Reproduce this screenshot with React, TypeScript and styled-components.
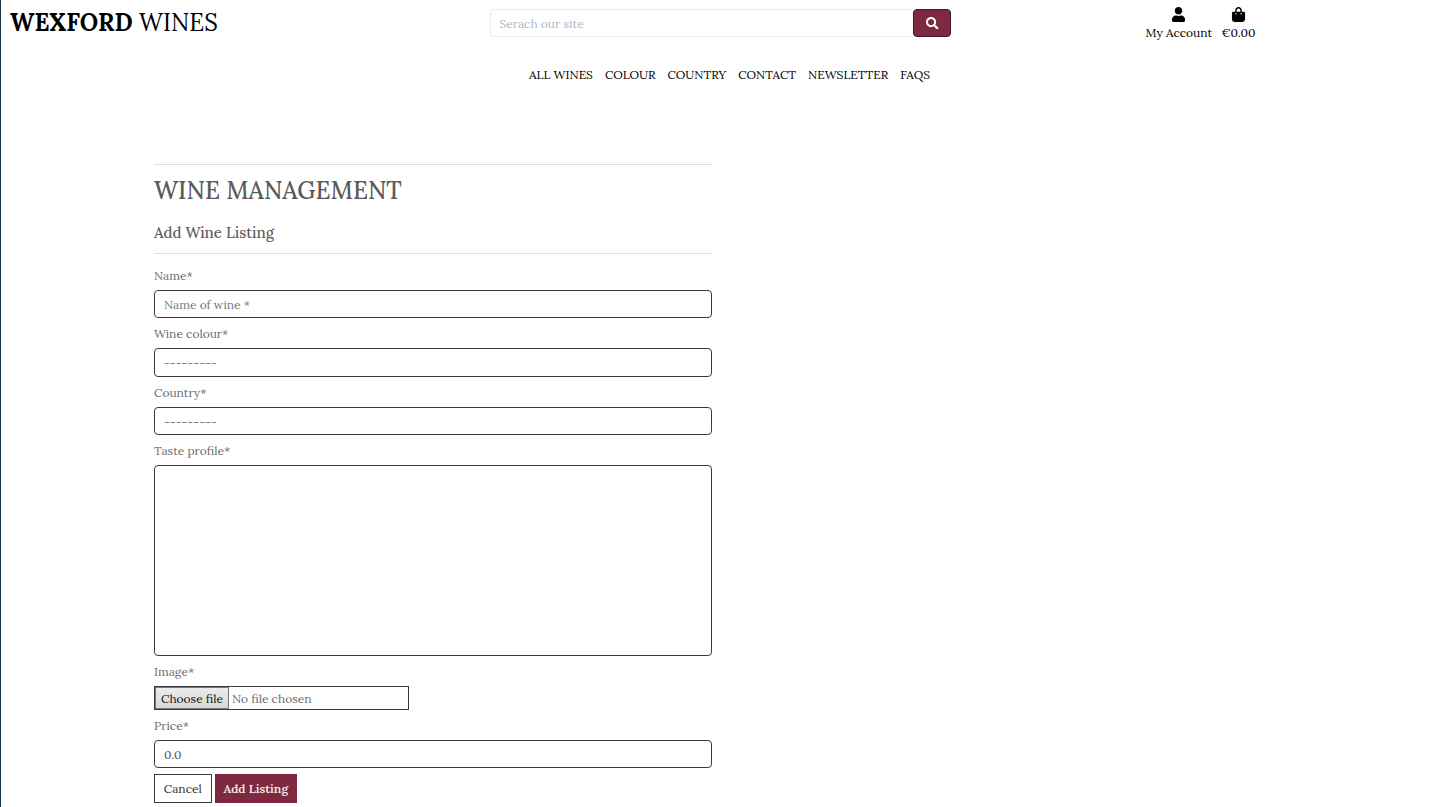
import React from "react";
import styled, { createGlobalStyle } from "styled-components";
import { FaSearch, FaUser } from "react-icons/fa";
import { FaBagShopping } from "react-icons/fa6";

const GlobalStyle = createGlobalStyle`
  *, *::before, *::after { box-sizing: border-box; }
  body {
    margin: 0;
    background: #fff;
    font-family: Lora, "Liberation Serif", serif;
    font-size: 12px;
    line-height: 18px;
    color: #000;
    overflow: hidden;
  }
`;

const Page = styled.div`
  height: 807px;
  border-left: 1px solid #1b3345;
  overflow: hidden;
`;

const Header = styled.header`
  display: grid;
  grid-template-columns: 489px 461.4px 1fr;
  height: 46px;
`;

const Logo = styled.a`
  padding: 7px 0 0 9px;
  font-size: 24px;
  line-height: 32px;
  white-space: nowrap;
`;

const Search = styled.form`
  display: flex;
  margin-top: 9px;
  height: 28.4px;
`;

const SearchField = styled.input`
  flex: 1;
  min-width: 0;
  padding: 1px 9px 0 8.5px;
  border: 1px solid #e9ebed;
  border-right: 0;
  border-radius: 4px 0 0 4px;
  outline: 0;
  font: inherit;
  &::placeholder { color: #aab7c4; opacity: 1; }
`;

const SearchButton = styled.button`
  display: flex;
  align-items: center;
  justify-content: center;
  width: 38px;
  padding: 0;
  border: 1px solid #3a1a26;
  border-radius: 4px;
  background: #7f2940;
  color: #fff;
  font-size: 12.5px;
`;

const Account = styled.div`
  display: flex;
  gap: 9.4px;
  padding: 7px 0 0 194.2px;
`;

const AccountLink = styled.a`
  display: flex;
  flex-direction: column;
  align-items: center;
  white-space: nowrap;
  svg { display: block; height: 15px; width: 15px; margin-bottom: 2px; }
`;

const Nav = styled.nav`
  display: flex;
  gap: 12px;
  padding: 20px 0 0 528px;
`;

const NavLink = styled.a`
  white-space: nowrap;
`;

const Main = styled.main`
  width: 558px;
  margin: 80px 0 0 153px;
  color: #6b6b6b;
`;

const Rule = styled.hr`
  height: 1px;
  margin: 0;
  border: 0;
  background: #dfdfdf;
`;

const Title = styled.h2`
  margin: 10px 0 0;
  font-size: 24px;
  line-height: 32px;
  font-weight: 500;
  color: #5a5a5a;
`;

const Subtitle = styled.h5`
  margin: 16px 0 10px;
  font-size: 15px;
  line-height: 20px;
  font-weight: 500;
  color: #5f5f5f;
`;

const Fields = styled.form`
  padding-top: 11.9px;
`;

const Field = styled.div`
  margin-bottom: 6px;
`;

const Label = styled.label`
  display: block;
  height: 18px;
  padding-top: 1px;
  margin-bottom: 6px;
`;

const Control = styled.input`
  display: block;
  width: 100%;
  height: 28.5px;
  padding: 1px 9px 0;
  border: 1px solid #3b3b3f;
  border-radius: 4px;
  outline: 0;
  background: #fff;
  font: inherit;
  color: #505458;
  &::placeholder { color: #74787b; opacity: 1; }
`;

const Select = styled.select`
  display: block;
  width: 100%;
  height: 28.5px;
  padding: 1px 9px 0;
  border: 1px solid #3b3b3f;
  border-radius: 4px;
  appearance: none;
  background: #fff;
  font: inherit;
  color: #65696d;
`;

const TextArea = styled.textarea`
  display: block;
  width: 100%;
  height: 190.5px;
  border: 1px solid #3b3b3f;
  border-radius: 4px;
  resize: none;
  outline: 0;
`;

const FilePicker = styled.div`
  display: flex;
  width: 255px;
  height: 24px;
  border: 1px solid #3b3b3f;
  line-height: 24px;
  white-space: nowrap;
`;

const FileButton = styled.span`
  width: 74px;
  margin-right: 3px;
  padding-left: 5px;
  border: 1px solid #77777a;
  background: linear-gradient(#ebebeb, #d8d8d8);
  line-height: 22px;
  color: #151515;
`;

const Actions = styled.div`
  display: flex;
  gap: 3px;
`;

const Button = styled.button<{ $primary?: boolean }>`
  width: ${(p) => (p.$primary ? 82.5 : 57.5)}px;
  height: 28.5px;
  padding: 0;
  border: 1px solid ${(p) => (p.$primary ? "#7f2940" : "#3b3b3f")};
  background: ${(p) => (p.$primary ? "#7f2940" : "#fff")};
  color: ${(p) => (p.$primary ? "#f3e8e9" : "#2c2f32")};
  font-family: inherit;
  font-size: 12px;
  font-weight: ${(p) => (p.$primary ? 600 : 400)};
  white-space: nowrap;
`;

const links = ["ALL WINES", "COLOUR", "COUNTRY", "CONTACT", "NEWSLETTER", "FAQS"];

export default function App() {
  return (
    <Page>
      <GlobalStyle />
      <Header>
        <Logo><strong>WEXFORD</strong> WINES</Logo>
        <Search>
          <SearchField placeholder="Serach our site" />
          <SearchButton type="button" aria-label="Search"><FaSearch /></SearchButton>
        </Search>
        <Account>
          <AccountLink><FaUser />My Account</AccountLink>
          <AccountLink><FaBagShopping />€0.00</AccountLink>
        </Account>
      </Header>
      <Nav>
        {links.map((text) => (
          <NavLink key={text}>{text}</NavLink>
        ))}
      </Nav>
      <Main>
        <Rule />
        <Title>WINE MANAGEMENT</Title>
        <Subtitle>Add Wine Listing</Subtitle>
        <Rule />
        <Fields>
          <Field>
            <Label>Name*</Label>
            <Control placeholder="Name of wine *" />
          </Field>
          <Field>
            <Label>Wine colour*</Label>
            <Select><option>---------</option></Select>
          </Field>
          <Field>
            <Label>Country*</Label>
            <Select><option>---------</option></Select>
          </Field>
          <Field>
            <Label>Taste profile*</Label>
            <TextArea />
          </Field>
          <Field>
            <Label>Image*</Label>
            <FilePicker><FileButton>Choose file</FileButton>No file chosen</FilePicker>
          </Field>
          <Field>
            <Label>Price*</Label>
            <Control defaultValue="0.0" />
          </Field>
          <Actions>
            <Button type="button">Cancel</Button>
            <Button type="button" $primary>Add Listing</Button>
          </Actions>
        </Fields>
      </Main>
    </Page>
  );
}
